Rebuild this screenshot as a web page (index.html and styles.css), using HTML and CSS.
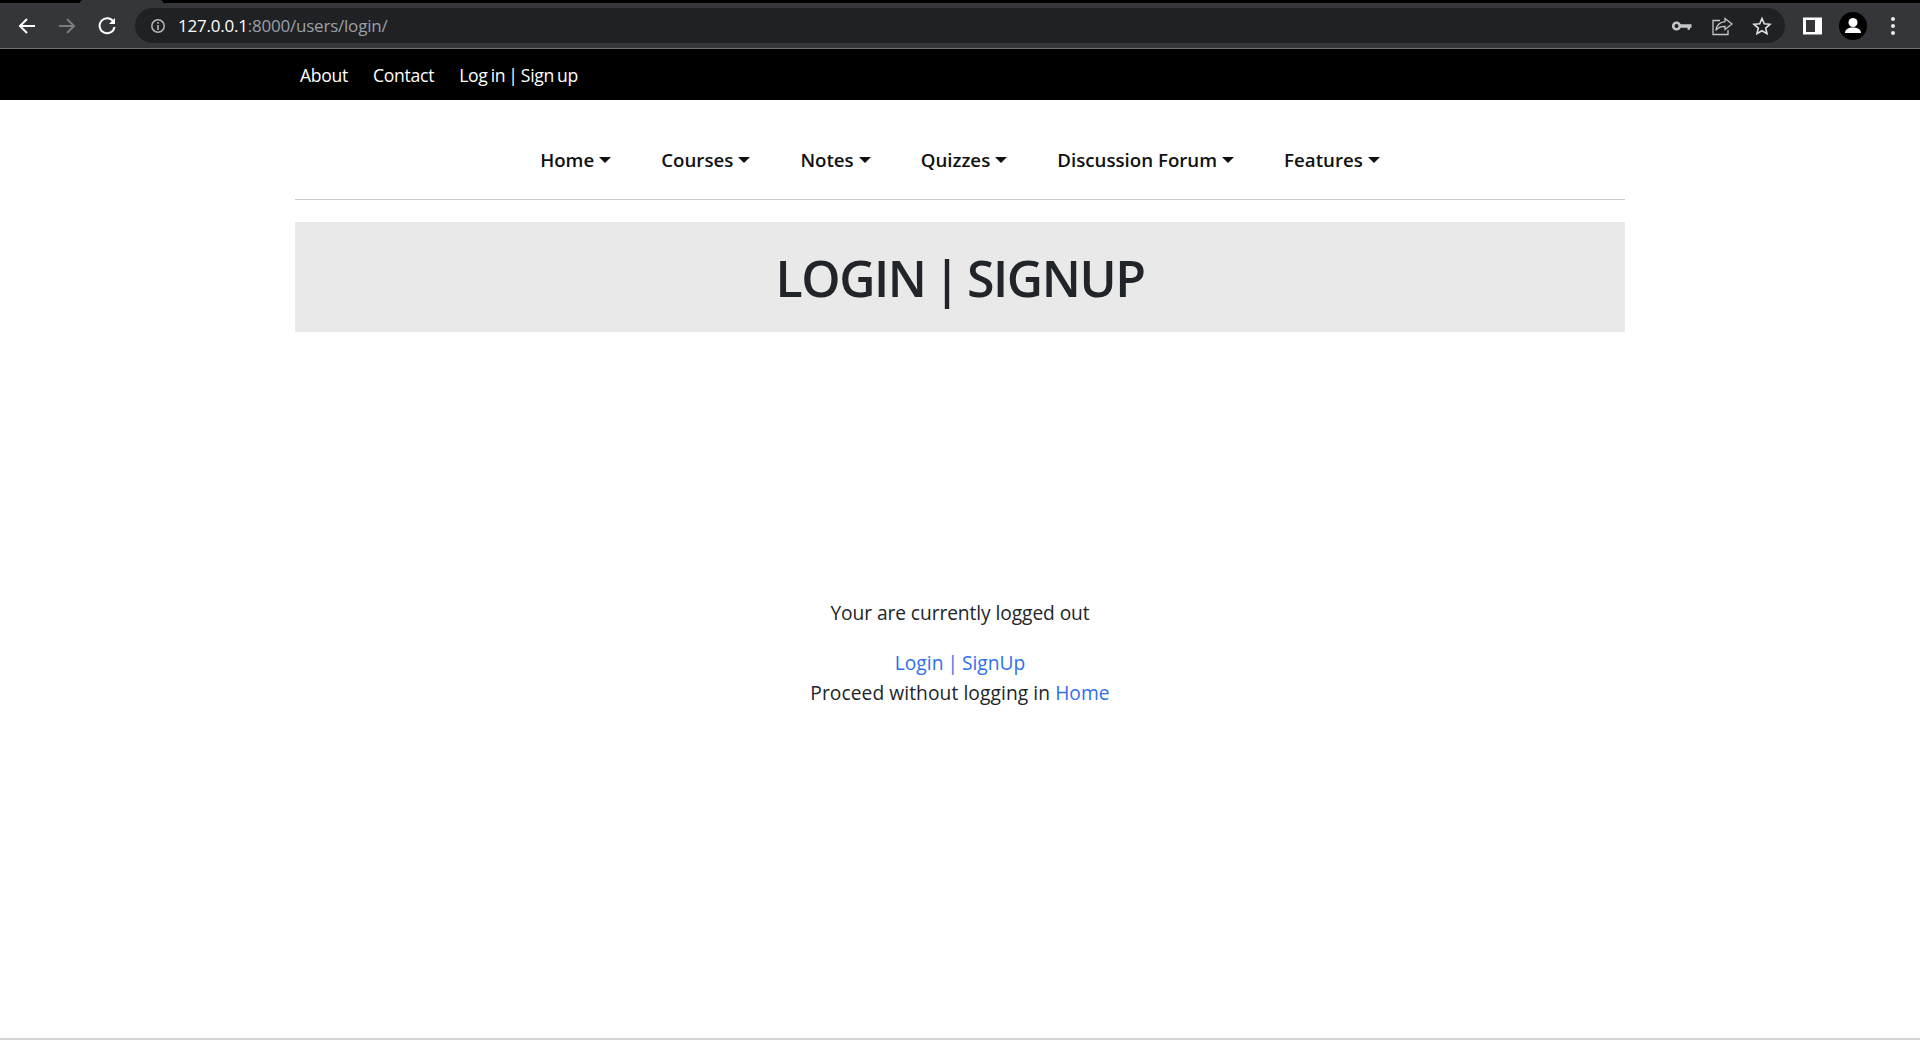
FILE: index.html
```html
<!DOCTYPE html>
<html lang="en">
<head>
<meta charset="UTF-8">
<title>Login | Signup</title>
<link rel="stylesheet" href="styles.css">
</head>
<body>
<div class="tabstrip"><div class="tabgap"></div></div>
<div class="toolbar">
	<div class="navbtns">
		<svg class="ico" viewBox="0 0 24 24"><path d="M20 12H5M12 5l-7 7 7 7" fill="none" stroke="#fff" stroke-width="2"/></svg>
		<svg class="ico" viewBox="0 0 24 24"><path d="M4 12h15M12 5l7 7-7 7" fill="none" stroke="#7b7c7d" stroke-width="2"/></svg>
		<svg class="ico" viewBox="0 0 24 24"><path d="M18.6 8A7.5 7.5 0 1 0 19.5 13" fill="none" stroke="#fff" stroke-width="2"/><path d="M20 4v6h-6z" fill="#fff"/></svg>
	</div>
	<div class="omnibox">
		<svg class="info" viewBox="0 0 16 16"><circle cx="8" cy="8" r="6.2" fill="none" stroke="#b5b7ba" stroke-width="1.5"/><path d="M7.2 7h1.6v5H7.2zM7.2 4h1.6v1.7H7.2z" fill="#b5b7ba"/></svg>
		<div class="url"><span class="host">127.0.0.1</span>:8000/users/login/</div>
		<div class="omni-icons">
			<svg class="ico" viewBox="0 0 24 24"><circle cx="6.500" cy="12" r="3.300" fill="none" stroke="#c4c6c9" stroke-width="2.600"/><path d="M10 10.300h11.500v3.400h-1.500v2h-2.500v-2H10z" fill="#c4c6c9"/></svg>
			<svg class="ico" viewBox="0 0 24 24"><path d="M15 4.500l7 5.500-7 5.500v-3.200c-4 0-7 1-9 4 .5-4.500 3.500-8 9-8.600z" fill="none" stroke="#c4c6c9" stroke-width="1.300"/><path d="M10 6.500H3V20.500h15V16" fill="none" stroke="#c4c6c9" stroke-width="1.300"/></svg>
			<svg class="ico" viewBox="0 0 24 24"><path d="M12 4.500l2.300 5.300 5.700.5-4.300 3.800 1.300 5.600-5-3-5 3 1.300-5.600L4 10.300l5.700-.5z" fill="none" stroke="#dfe1e4" stroke-width="1.600"/></svg>
		</div>
	</div>
	<div class="chrome-right">
		<svg class="ico" viewBox="0 0 24 24"><path d="M2 3.500h19v17H2z" fill="#fff"/><path d="M5 6h9v12H5z" fill="#35363a"/></svg>
		<div class="avatar">
			<svg viewBox="0 0 28 28"><circle cx="14" cy="10.500" r="4.500" fill="#fff"/><path d="M6 21c0-4 4-5.500 8-5.500s8 1.500 8 5.500z" fill="#fff"/></svg>
		</div>
		<div class="dots"><i></i><i></i><i></i></div>
	</div>
</div>

<div class="topbar">
	<div class="container topbar-links">
		<a href="#">About</a>
		<a href="#">Contact</a>
		<a href="#">Log in | Sign up</a>
	</div>
</div>

<div class="container">
	<ul class="menu">
		<li class="caret">Home</li>
		<li class="caret">Courses</li>
		<li class="caret">Notes</li>
		<li class="caret">Quizzes</li>
		<li class="caret">Discussion Forum</li>
		<li class="caret">Features</li>
	</ul>
	<div class="banner"><h1>LOGIN | SIGNUP</h1></div>
	<div class="content">
		<p class="status">Your are currently logged out</p>
		<div><a class="tight" href="#">Login | SignUp</a></div>
		<div class="proceed">Proceed without logging in <a href="#">Home</a></div>
	</div>
</div>
<div class="bottomline"></div>
</body>
</html>
```

FILE: styles.css
```css
*{
	margin: 0;
	padding: 0;
	box-sizing: border-box;
}
html,body{
	width: 100%;
	height: 100%;
	overflow: hidden;
}
body{
	position: relative;
	background: #fff;
	color: #212529;
	font-family: "Open Sans", "Noto Sans", sans-serif;
	font-size: 19.2px;
	line-height: 30px;
}
a{
	color: #2f6fed;
	text-decoration: none;
}
.tight{
	word-spacing: -1px;
}

/* browser chrome */
.tabstrip{
	height: 3px;
	background: #000;
}
.tabgap{
	width: 83px;
	height: 3px;
	margin-left: 80px;
	background: #35363a;
	border-radius: 4px 4px 0 0;
}
.toolbar{
	height: 46px;
	display: flex;
	align-items: center;
	background: #35363a;
	border-bottom: 1px solid #6f7072;
}
.navbtns{
	display: flex;
	gap: 16px;
	padding-left: 15px;
	width: 135px;
}
.ico{
	width: 24px;
	height: 24px;
	display: block;
}
.omnibox{
	flex: 1;
	height: 35px;
	display: flex;
	align-items: center;
	background: #202124;
	border-radius: 18px;
	padding-left: 15px;
}
.info{
	width: 16px;
	height: 16px;
	margin-right: 12px;
}
.url{
	flex: 1;
	font-size: 17px;
	color: #9aa0a6;
	letter-spacing: -0.22px;
}
.host{
	color: #fff;
}
.omni-icons{
	display: flex;
	gap: 16px;
	padding-right: 11px;
}
.chrome-right{
	display: flex;
	align-items: center;
	width: 135px;
	padding-left: 16px;
}
.avatar{
	width: 28px;
	height: 28px;
	margin-left: 14px;
	border-radius: 50%;
	background: #000;
}
.avatar svg{
	display: block;
}
.dots{
	margin-left: 24px;
	display: flex;
	flex-direction: column;
	gap: 3px;
}
.dots i{
	width: 4px;
	height: 4px;
	border-radius: 50%;
	background: #e8eaed;
}

/* page */
.container{
	width: 1330px;
	margin: 0 auto;
}
.topbar{
	height: 51px;
	background: #000;
}
.topbar-links{
	height: 51px;
	display: flex;
	align-items: center;
	gap: 25px;
	padding-left: 5px;
	font-size: 17.6px;
	letter-spacing: -0.3px;
	word-spacing: -1.2px;
}
.topbar-links a{
	color: #fff;
}
.menu{
	height: 100px;
	padding-top: 21px;
	list-style: none;
	display: flex;
	justify-content: center;
	align-items: center;
	gap: 50px;
	border-bottom: 1px solid #ccc;
	color: #111;
	font-weight: 600;
	font-size: 18.7px;
}
.caret::after{
	content: "";
	display: inline-block;
	margin-left: 5px;
	vertical-align: 4px;
	border-top: 6px solid #111;
	border-left: 6px solid transparent;
	border-right: 6px solid transparent;
}
.banner{
	margin-top: 22px;
	height: 110px;
	display: flex;
	align-items: center;
	justify-content: center;
	background: #e9e9e9;
}
h1{
	padding-top: 1px;
	font-size: 50px;
	font-weight: 600;
	line-height: 1.2;
	letter-spacing: -1.4px;
	word-spacing: -4px;
}
.content{
	padding-top: 266px;
	text-align: center;
}
.status{
	margin-bottom: 20px;
	letter-spacing: -0.08px;
}
.proceed{
	letter-spacing: 0.08px;
}
.bottomline{
	position: absolute;
	left: 0;
	right: 0;
	top: 1038px;
	height: 2px;
	background: #d4d4d4;
}
```
